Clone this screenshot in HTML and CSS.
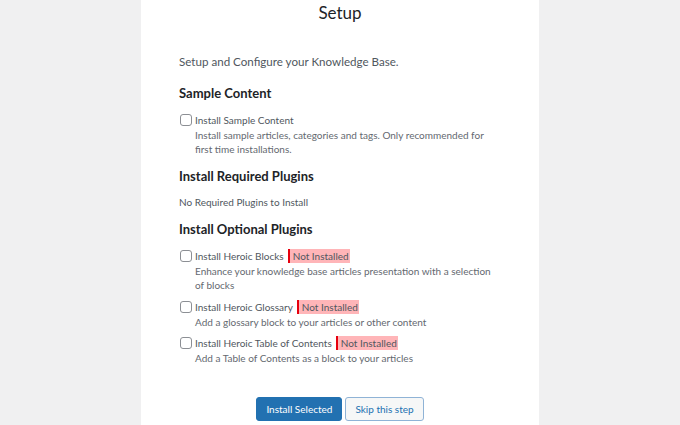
FILE: index.html
```html
<!DOCTYPE html>
<html lang="en">
<head>
<meta charset="utf-8">
<title>Setup</title>
<link rel="stylesheet" href="styles.css">
</head>
<body>
<div class="card">
  <h1 class="title">Setup</h1>
  <p class="intro">Setup and Configure your Knowledge Base.</p>

  <h2 class="section first">Sample Content</h2>
  <div class="option">
    <label class="opt-row"><span class="box"></span><span class="opt-label">Install Sample Content</span></label>
    <p class="desc">Install sample articles, categories and tags. Only recommended for first time installations.</p>
  </div>

  <h2 class="section">Install Required Plugins</h2>
  <p class="note">No Required Plugins to Install</p>

  <h2 class="section">Install Optional Plugins</h2>
  <div class="option plugin">
    <label class="opt-row"><span class="box"></span><span class="opt-label">Install Heroic Blocks</span><span class="badge">Not Installed</span></label>
    <p class="desc">Enhance your knowledge base articles presentation with a selection of blocks</p>
  </div>
  <div class="option plugin second">
    <label class="opt-row"><span class="box"></span><span class="opt-label">Install Heroic Glossary</span><span class="badge">Not Installed</span></label>
    <p class="desc">Add a glossary block to your articles or other content</p>
  </div>
  <div class="option plugin third">
    <label class="opt-row"><span class="box"></span><span class="opt-label">Install Heroic Table of Contents</span><span class="badge">Not Installed</span></label>
    <p class="desc">Add a Table of Contents as a block to your articles</p>
  </div>

  <div class="actions">
    <button class="btn primary">Install Selected</button>
    <button class="btn secondary">Skip this step</button>
  </div>
</div>
</body>
</html>
```

FILE: styles.css
```css
html, body {
  margin: 0;
  padding: 0;
}
body {
  background: #f0f0f1;
  font-family: Lato, "Open Sans", sans-serif;
  color: #50575e;
}
.card {
  width: 398px;
  min-height: 425px;
  margin: 0 auto;
  background: #ffffff;
  box-sizing: border-box;
  padding: 1px 38px 0;
}
.title {
  margin: 0;
  font-size: 17px;
  font-weight: 400;
  line-height: 24px;
  text-align: center;
  color: #1d2327;
}
.intro {
  margin: 28px 0 0;
  font-size: 11.6px;
  line-height: 18px;
  color: #50575e;
}
.section {
  margin: 11px 0 0;
  font-size: 13px;
  font-weight: 700;
  line-height: 18px;
  color: #1d2327;
}
.section.first {
  margin-top: 13px;
}
.option {
  margin-top: 10px;
}
.option.second {
  margin-top: 7px;
}
.option.third {
  margin-top: 6px;
}
.opt-row {
  display: flex;
  align-items: center;
  height: 16px;
}
.box {
  width: 12px;
  height: 12px;
  box-sizing: border-box;
  border: 1px solid #8c8f94;
  border-radius: 3px;
  background: #fff;
  margin: 0 3px 0 1px;
}
.opt-label {
  font-size: 10px;
  line-height: 14px;
  color: #50575e;
}
.badge {
  margin-left: 4px;
  height: 14px;
  line-height: 14px;
  padding: 0 1px 0 3px;
  font-size: 10px;
  background: #ffb5b8;
  border-left: 2px solid #e6000f;
  color: #50575e;
}
.desc {
  margin: 0;
  padding-left: 16px;
  font-size: 10px;
  line-height: 14px;
  color: #646970;
}
.note {
  margin: 10px 0 0;
  font-size: 10px;
  line-height: 14px;
  color: #50575e;
}
.actions {
  display: flex;
  justify-content: center;
  gap: 3px;
  margin-top: 32px;
}
.btn {
  font-family: inherit;
  font-size: 10px;
  height: 24px;
  padding: 0 9px;
  border-radius: 3px;
  cursor: pointer;
}
.primary {
  background: #2271b1;
  border: 1px solid #2271b1;
  color: #ffffff;
}
.secondary {
  background: #f6f7f7;
  border: 1px solid #8fb3d6;
  color: #2271b1;
}
```
